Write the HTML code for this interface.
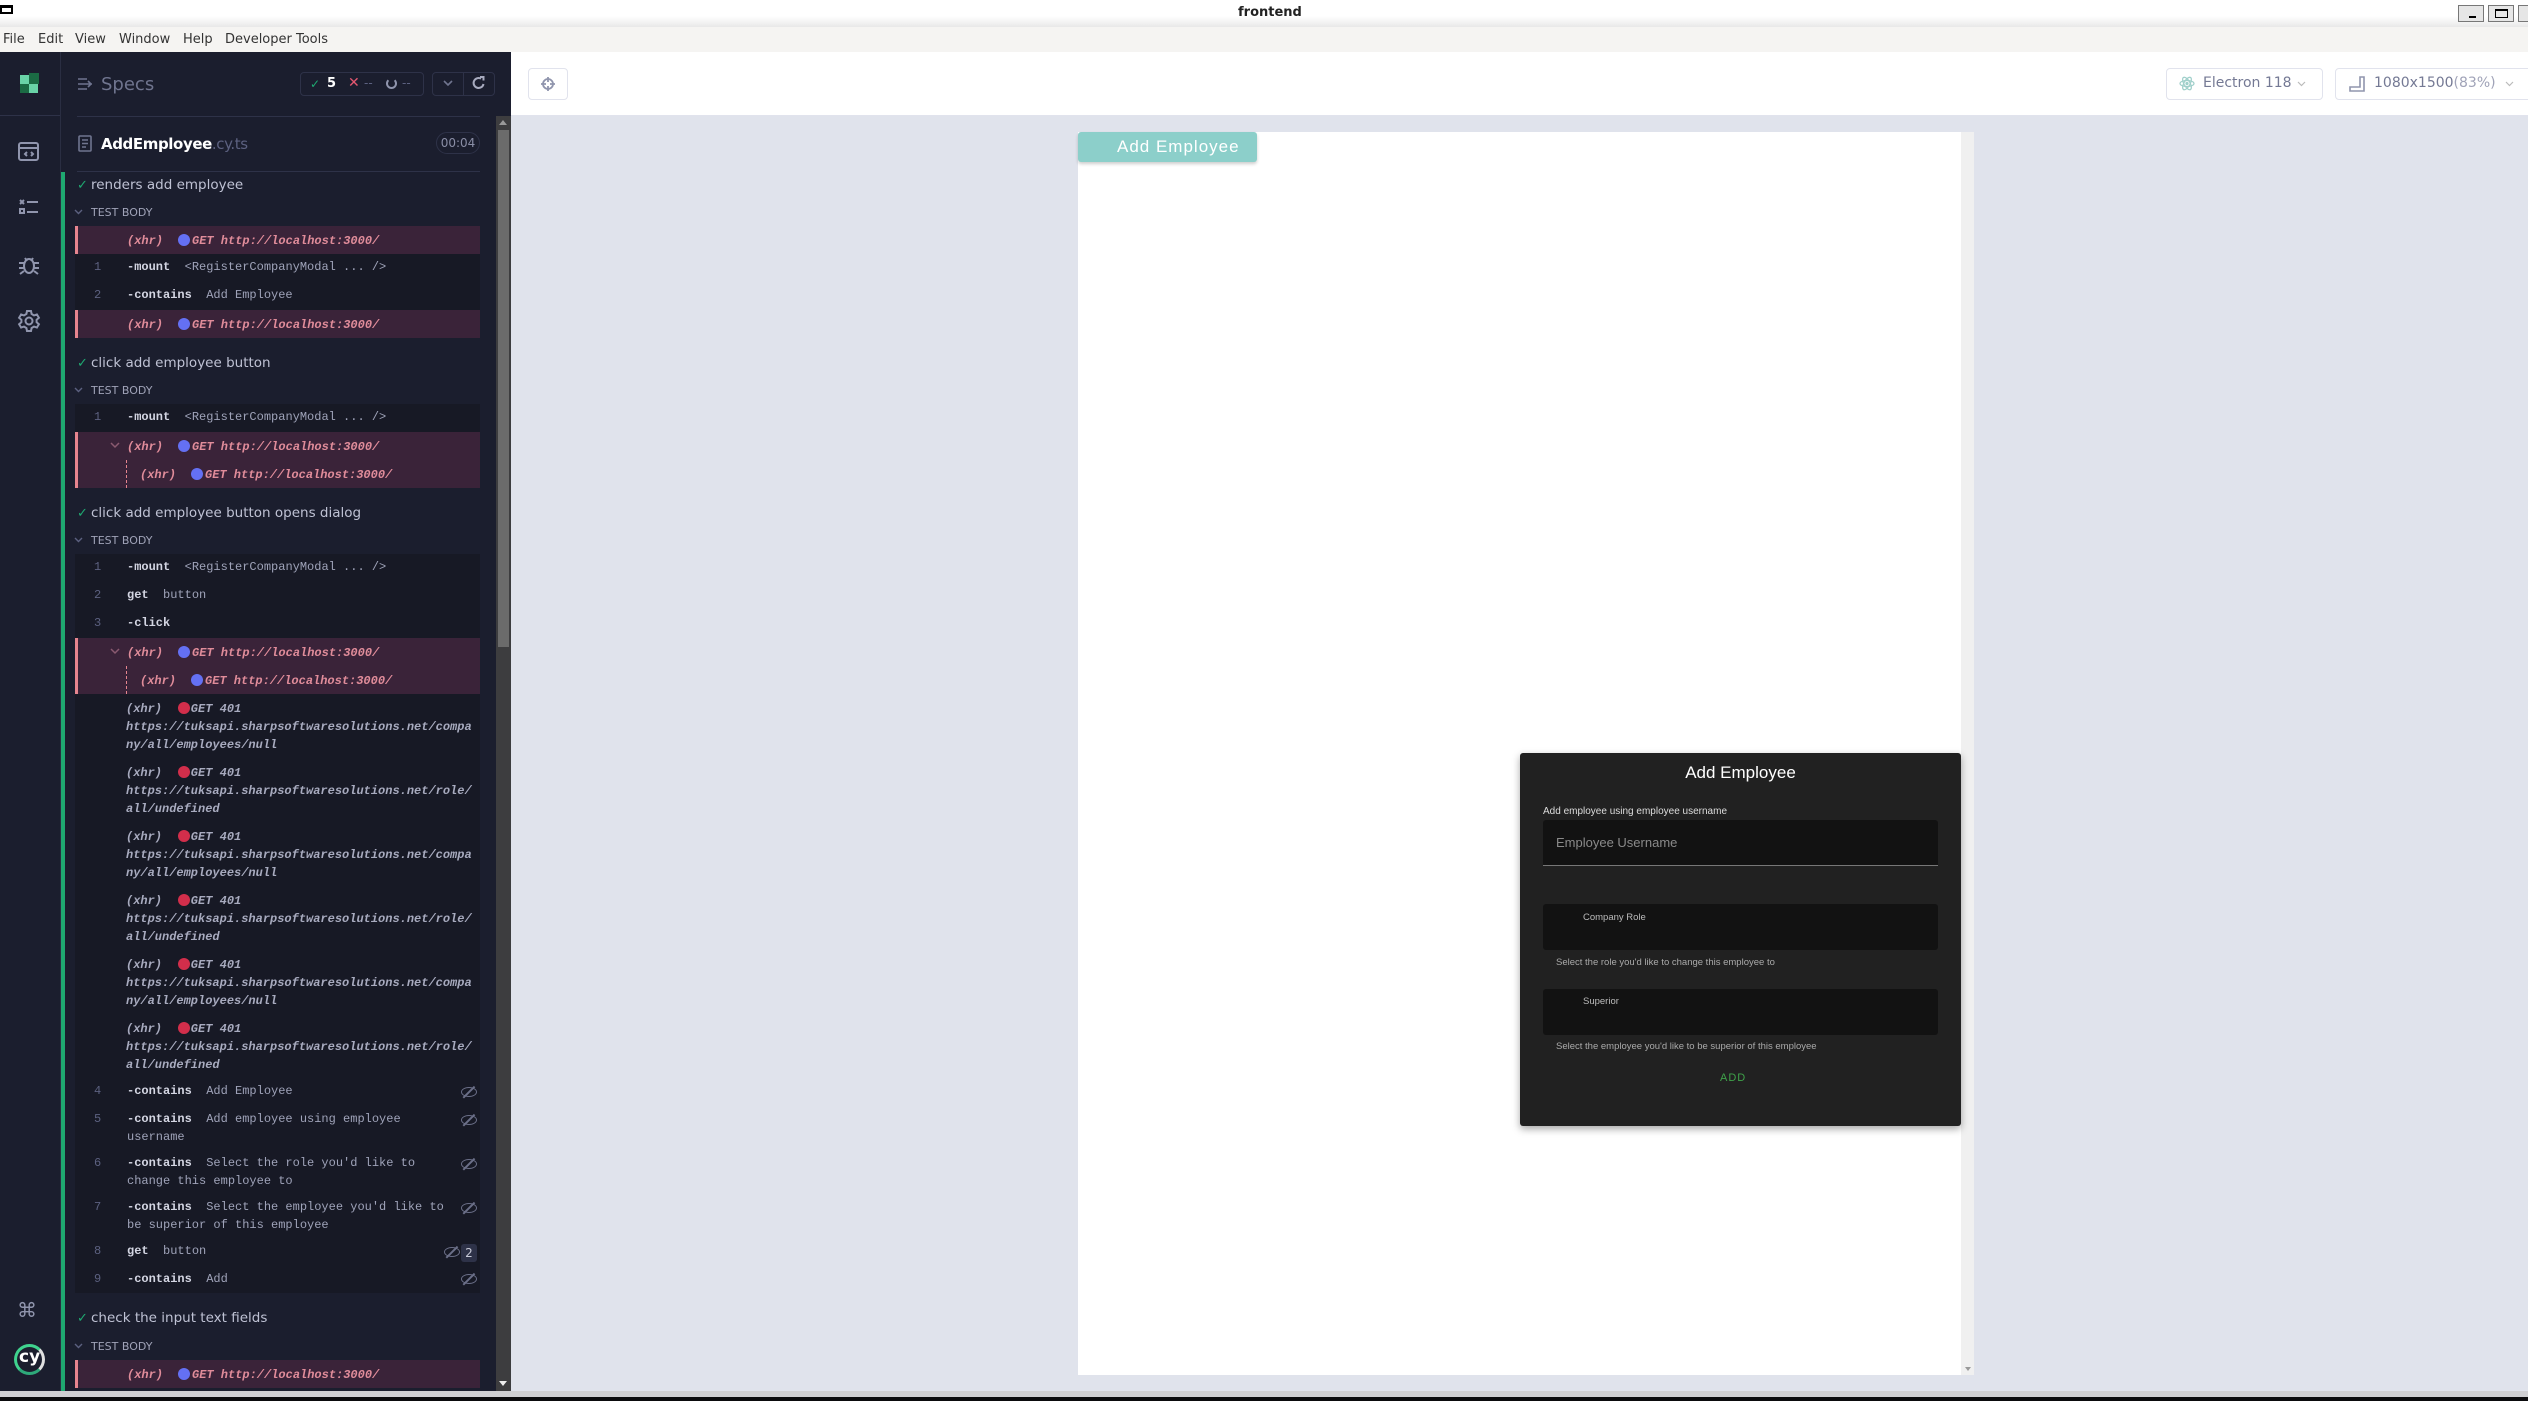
<!DOCTYPE html>
<html><head><meta charset="utf-8">
<style>
*{margin:0;padding:0;box-sizing:border-box}
body{width:2528px;height:1401px;overflow:hidden;background:#e0e3ec;font-family:"Liberation Sans",sans-serif;position:relative}
.a{position:absolute;white-space:nowrap}
.m{font-family:"Liberation Mono",monospace;font-size:12px;line-height:18px}
.s{font-family:"DejaVu Sans","Liberation Sans",sans-serif}
.x{color:#e08c9a;font-style:italic;font-weight:bold}
.g{color:#a8abbf;font-style:italic;font-weight:bold}
.dot{position:absolute;width:12px;height:12px;border-radius:6px}
.n{color:#5c6180}
.c{color:#d4d6e3;font-weight:bold}
.ar{color:#9fa3b9}
.xb{position:absolute;left:75px;width:405px;background:#3a2339;border-left:3px solid #e6858f}
.cb{position:absolute;left:75px;width:405px;background:#171925}
.t{color:#bfc2d4;font-size:13.5px}
.tb{color:#a0a3b8;font-size:11px}
.chev{position:absolute;left:74px}
.eye{position:absolute;left:461px;width:16px;height:10px;border:1.5px solid #6b6f88;border-radius:50%}
.eye:after{content:"";position:absolute;left:6px;top:-4px;width:1.5px;height:16px;background:#6b6f88;transform:rotate(45deg)}
</style></head><body>
<div class="a" style="left:0;top:0;width:2528px;height:27px;background:linear-gradient(#fff,#fff 60%,#e8e8e8)"></div>
<div class="a" style="left:0;top:5px;width:13px;height:9px;border:2px solid #000;border-top-width:3px"></div>
<div class="a s" style="left:1238px;top:5px;font-size:13px;font-weight:bold;color:#222">frontend</div>
<div class="a" style="left:2458px;top:5px;width:26px;height:17px;border:1px solid #777;background:#e6e6e6"><div style="position:absolute;left:10px;top:10px;width:7px;height:2px;background:#000"></div></div>
<div class="a" style="left:2488px;top:5px;width:26px;height:17px;border:1px solid #777;background:#e6e6e6"><div style="position:absolute;left:6px;top:3px;width:13px;height:9px;border:1px solid #000;border-top-width:2px"></div></div>
<div class="a" style="left:2518px;top:5px;width:12px;height:17px;border:1px solid #777;background:#e6e6e6"></div>
<div class="a s" style="left:0;top:27px;width:2528px;height:25px;background:#f5f4f2;font-size:13px;color:#333;line-height:26px">
<span class="a" style="left:3px">File</span><span class="a" style="left:38px">Edit</span><span class="a" style="left:75px">View</span><span class="a" style="left:119px">Window</span><span class="a" style="left:183px">Help</span><span class="a" style="left:225px">Developer Tools</span></div>
<div class="a" style="left:0;top:52px;width:61px;height:1339px;background:#1b1e2e;border-right:1px solid #2a2e42"></div>
<div class="a" style="left:0;top:115px;width:60px;height:1px;background:#2e3248"></div>
<div class="a" style="left:20px;top:75px;width:9px;height:9px;background:#69d3a7"></div>
<div class="a" style="left:29px;top:73px;width:10px;height:11px;background:#1b6b44"></div>
<div class="a" style="left:20px;top:84px;width:9px;height:9px;background:#1b6b44"></div>
<div class="a" style="left:29px;top:84px;width:9px;height:9px;background:#69d3a7"></div>
<svg class="a" style="left:18px;top:142px" width="22" height="20" viewBox="0 0 22 20" fill="none" stroke="#9095ad" stroke-width="2"><rect x="1" y="1" width="19" height="17" rx="2"/><path d="M1 6h19M9 10l-2 2 2 2M13 10l2 2-2 2"/></svg>
<svg class="a" style="left:18px;top:198px" width="22" height="20" viewBox="0 0 22 20" fill="none" stroke="#9095ad" stroke-width="2"><path d="M2 2l4 4M6 2l-4 4M9 4h11M9 14h11"/><rect x="2" y="11" width="4" height="4"/></svg>
<svg class="a" style="left:18px;top:254px" width="22" height="22" viewBox="0 0 22 22" fill="none" stroke="#9095ad" stroke-width="2"><ellipse cx="11" cy="12" rx="5" ry="7"/><path d="M7 4l2 3M15 4l-2 3M1 9h5M16 9h5M1 14h5M16 14h5M2 20l4-3M20 20l-4-3"/></svg>
<svg class="a" style="left:17px;top:309px" width="24" height="24" viewBox="0 0 24 24" fill="none" stroke="#9095ad" stroke-width="2"><circle cx="12" cy="12" r="3.5"/><path d="M10 2h4l.6 3 2.4 1.4 2.9-1 2 3.4-2.3 2v2.4l2.3 2-2 3.4-2.9-1L14.6 19l-.6 3h-4l-.6-3L7 17.6l-2.9 1-2-3.4 2.3-2v-2.4l-2.3-2 2-3.4 2.9 1L9.4 5z"/></svg>
<div class="a s" style="left:17px;top:1298px;font-size:20px;color:#9095ad">⌘</div>
<div class="a" style="left:14px;top:1344px;width:31px;height:31px;border-radius:50%;border:3px solid #3fd38e;border-right-color:#e0e0e0;border-bottom-color:#2ea97a"></div>
<div class="a s" style="left:19px;top:1347px;font-size:17px;font-weight:bold;color:#fff">cy</div>
<div class="a" style="left:61px;top:52px;width:450px;height:1339px;background:#1b1e2e"></div>
<svg class="a" style="left:77px;top:77px" width="16" height="14" viewBox="0 0 16 14" stroke="#6f748f" stroke-width="1.6" fill="none"><path d="M1 2h9M1 7h14M1 12h9M11 4l3 3-3 3"/></svg>
<div class="a s" style="left:101px;top:74px;font-size:18px;color:#70758f">Specs</div>
<div class="a" style="left:300px;top:72px;width:124px;height:24px;border:1px solid #2e3248;border-radius:4px"></div>
<div class="a s" style="left:310px;top:77px;font-size:12px;color:#1fa971;font-weight:bold">✓</div>
<div class="a s" style="left:327px;top:76px;font-size:13px;color:#fff;font-weight:bold">5</div>
<div class="a s" style="left:348px;top:75px;font-size:14px;color:#e45770;font-weight:bold">✕</div>
<div class="a s" style="left:364px;top:76px;font-size:12px;color:#5c6180">--</div>
<div class="a" style="left:386px;top:78px;width:11px;height:11px;border:2px solid #9095ad;border-top-color:transparent;border-radius:50%"></div>
<div class="a s" style="left:402px;top:76px;font-size:12px;color:#5c6180">--</div>
<div class="a" style="left:432px;top:72px;width:63px;height:24px;border:1px solid #2e3248;border-radius:4px"></div>
<div class="a" style="left:463px;top:72px;width:1px;height:24px;background:#2e3248"></div>
<svg class="a" style="left:442px;top:79px" width="12" height="8" viewBox="0 0 12 8" stroke="#70758f" stroke-width="1.6" fill="none"><path d="M2 2l4 4 4-4"/></svg>
<svg class="a" style="left:472px;top:76px" width="14" height="14" viewBox="0 0 14 14" stroke="#a8abbf" stroke-width="2" fill="none"><path d="M11.5 8A5 5 0 1 1 9 2.6M8 1h3.5v3.5"/></svg>
<div class="a" style="left:77px;top:116px;width:403px;height:1px;background:#2e3248"></div>
<svg class="a" style="left:78px;top:135px" width="14" height="17" viewBox="0 0 14 17" stroke="#70758f" stroke-width="1.6" fill="none"><rect x="1" y="1" width="12" height="15" rx="1"/><path d="M4 5h6M4 8.5h6M4 12h4"/></svg>
<div class="a s" style="left:101px;top:135px;font-size:15px;color:#fff;font-weight:bold;letter-spacing:-0.4px">AddEmployee<span style="color:#5c6180;font-weight:normal">.cy.ts</span></div>
<div class="a s" style="left:436px;top:132px;width:44px;height:22px;border:1px solid #2e3248;border-radius:11px;font-size:12px;color:#8a8ea6;text-align:center;line-height:20px">00:04</div>
<div class="a" style="left:77px;top:171px;width:403px;height:1px;background:#2e3248"></div>
<div class="a" style="left:61px;top:172px;width:4px;height:1219px;background:#1fa971"></div>

<!-- test 1 -->
<div class="a s" style="left:77px;top:178px;font-size:13px;color:#1fa971;font-weight:bold">✓</div>
<div class="a s t" style="left:91px;top:177px">renders add employee</div>
<svg class="chev" style="top:209px" width="9" height="6" viewBox="0 0 9 6" stroke="#5c6180" stroke-width="1.4" fill="none"><path d="M1 1l3.5 3.5L8 1"/></svg>
<div class="a s tb" style="left:91px;top:206px">TEST BODY</div>
<div class="xb" style="top:226px;height:28px"></div>
<div class="cb" style="top:254px;height:56px"></div>
<div class="xb" style="top:310px;height:28px"></div>
<div class="a m x" style="left:127px;top:232px">(xhr)</div><div class="dot" style="left:178px;top:234px;background:#6470f3"></div><div class="a m x" style="left:192px;top:232px">GET http://localhost:3000/</div>
<div class="a m n" style="left:94px;top:258px">1</div><div class="a m" style="left:127px;top:258px"><span class="c">-mount</span>&nbsp; <span class="ar">&lt;RegisterCompanyModal ... /&gt;</span></div>
<div class="a m n" style="left:94px;top:286px">2</div><div class="a m" style="left:127px;top:286px"><span class="c">-contains</span>&nbsp; <span class="ar">Add Employee</span></div>
<div class="a m x" style="left:127px;top:316px">(xhr)</div><div class="dot" style="left:178px;top:318px;background:#6470f3"></div><div class="a m x" style="left:192px;top:316px">GET http://localhost:3000/</div>

<!-- test 2 -->
<div class="a s" style="left:77px;top:356px;font-size:13px;color:#1fa971;font-weight:bold">✓</div>
<div class="a s t" style="left:91px;top:355px">click add employee button</div>
<svg class="chev" style="top:387px" width="9" height="6" viewBox="0 0 9 6" stroke="#5c6180" stroke-width="1.4" fill="none"><path d="M1 1l3.5 3.5L8 1"/></svg>
<div class="a s tb" style="left:91px;top:384px">TEST BODY</div>
<div class="cb" style="top:404px;height:28px"></div>
<div class="xb" style="top:432px;height:56px"></div>
<div class="a m n" style="left:94px;top:408px">1</div><div class="a m" style="left:127px;top:408px"><span class="c">-mount</span>&nbsp; <span class="ar">&lt;RegisterCompanyModal ... /&gt;</span></div>
<svg class="a" style="left:110px;top:442px" width="10" height="7" viewBox="0 0 10 7" stroke="#8a5a70" stroke-width="1.5" fill="none"><path d="M1 1l4 4 4-4"/></svg>
<div class="a m x" style="left:127px;top:438px">(xhr)</div><div class="dot" style="left:178px;top:440px;background:#6470f3"></div><div class="a m x" style="left:192px;top:438px">GET http://localhost:3000/</div>
<div class="a" style="left:126px;top:460px;height:28px;border-left:1px dashed #e6858f"></div>
<div class="a m x" style="left:140px;top:466px">(xhr)</div><div class="dot" style="left:191px;top:468px;background:#6470f3"></div><div class="a m x" style="left:205px;top:466px">GET http://localhost:3000/</div>

<!-- test 3 -->
<div class="a s" style="left:77px;top:506px;font-size:13px;color:#1fa971;font-weight:bold">✓</div>
<div class="a s t" style="left:91px;top:505px">click add employee button opens dialog</div>
<svg class="chev" style="top:537px" width="9" height="6" viewBox="0 0 9 6" stroke="#5c6180" stroke-width="1.4" fill="none"><path d="M1 1l3.5 3.5L8 1"/></svg>
<div class="a s tb" style="left:91px;top:534px">TEST BODY</div>
<div class="cb" style="top:554px;height:84px"></div>
<div class="xb" style="top:638px;height:56px"></div>
<div class="cb" style="top:694px;height:599px"></div>
<div class="a m n" style="left:94px;top:558px">1</div><div class="a m" style="left:127px;top:558px"><span class="c">-mount</span>&nbsp; <span class="ar">&lt;RegisterCompanyModal ... /&gt;</span></div>
<div class="a m n" style="left:94px;top:586px">2</div><div class="a m" style="left:127px;top:586px"><span class="c">get</span>&nbsp; <span class="ar">button</span></div>
<div class="a m n" style="left:94px;top:614px">3</div><div class="a m" style="left:127px;top:614px"><span class="c">-click</span></div>
<svg class="a" style="left:110px;top:648px" width="10" height="7" viewBox="0 0 10 7" stroke="#8a5a70" stroke-width="1.5" fill="none"><path d="M1 1l4 4 4-4"/></svg>
<div class="a m x" style="left:127px;top:644px">(xhr)</div><div class="dot" style="left:178px;top:646px;background:#6470f3"></div><div class="a m x" style="left:192px;top:644px">GET http://localhost:3000/</div>
<div class="a" style="left:126px;top:666px;height:28px;border-left:1px dashed #e6858f"></div>
<div class="a m x" style="left:140px;top:672px">(xhr)</div><div class="dot" style="left:191px;top:674px;background:#6470f3"></div><div class="a m x" style="left:205px;top:672px">GET http://localhost:3000/</div>

<div class="a m g" style="left:126px;top:700px">(xhr)&nbsp; &nbsp; GET 401<br>https://tuksapi.sharpsoftwaresolutions.net/compa<br>ny/all/employees/null</div><div class="dot" style="left:178px;top:702px;background:#d22e4b"></div>
<div class="a m g" style="left:126px;top:764px">(xhr)&nbsp; &nbsp; GET 401<br>https://tuksapi.sharpsoftwaresolutions.net/role/<br>all/undefined</div><div class="dot" style="left:178px;top:766px;background:#d22e4b"></div>
<div class="a m g" style="left:126px;top:828px">(xhr)&nbsp; &nbsp; GET 401<br>https://tuksapi.sharpsoftwaresolutions.net/compa<br>ny/all/employees/null</div><div class="dot" style="left:178px;top:830px;background:#d22e4b"></div>
<div class="a m g" style="left:126px;top:892px">(xhr)&nbsp; &nbsp; GET 401<br>https://tuksapi.sharpsoftwaresolutions.net/role/<br>all/undefined</div><div class="dot" style="left:178px;top:894px;background:#d22e4b"></div>
<div class="a m g" style="left:126px;top:956px">(xhr)&nbsp; &nbsp; GET 401<br>https://tuksapi.sharpsoftwaresolutions.net/compa<br>ny/all/employees/null</div><div class="dot" style="left:178px;top:958px;background:#d22e4b"></div>
<div class="a m g" style="left:126px;top:1020px">(xhr)&nbsp; &nbsp; GET 401<br>https://tuksapi.sharpsoftwaresolutions.net/role/<br>all/undefined</div><div class="dot" style="left:178px;top:1022px;background:#d22e4b"></div>

<div class="a m n" style="left:94px;top:1082px">4</div><div class="a m" style="left:127px;top:1082px"><span class="c">-contains</span>&nbsp; <span class="ar">Add Employee</span></div>
<div class="a m n" style="left:94px;top:1110px">5</div><div class="a m ar" style="left:127px;top:1110px"><span class="c">-contains</span>&nbsp; Add employee using employee<br>username</div>
<div class="a m n" style="left:94px;top:1154px">6</div><div class="a m ar" style="left:127px;top:1154px"><span class="c">-contains</span>&nbsp; Select the role you'd like to<br>change this employee to</div>
<div class="a m n" style="left:94px;top:1198px">7</div><div class="a m ar" style="left:127px;top:1198px"><span class="c">-contains</span>&nbsp; Select the employee you'd like to<br>be superior of this employee</div>
<div class="a m n" style="left:94px;top:1242px">8</div><div class="a m" style="left:127px;top:1242px"><span class="c">get</span>&nbsp; <span class="ar">button</span></div>
<div class="a m n" style="left:94px;top:1270px">9</div><div class="a m" style="left:127px;top:1270px"><span class="c">-contains</span>&nbsp; <span class="ar">Add</span></div>
<div class="eye" style="top:1087px"></div><div class="eye" style="top:1115px"></div><div class="eye" style="top:1159px"></div><div class="eye" style="top:1203px"></div><div class="eye" style="top:1274px"></div>
<div class="eye" style="left:444px;top:1247px"></div>
<div class="a s" style="left:461px;top:1244px;width:16px;height:18px;background:#2e3248;border-radius:3px;color:#c8cad8;font-size:12px;text-align:center;line-height:18px">2</div>

<!-- test 4 -->
<div class="a s" style="left:77px;top:1311px;font-size:13px;color:#1fa971;font-weight:bold">✓</div>
<div class="a s t" style="left:91px;top:1310px">check the input text fields</div>
<svg class="chev" style="top:1343px" width="9" height="6" viewBox="0 0 9 6" stroke="#5c6180" stroke-width="1.4" fill="none"><path d="M1 1l3.5 3.5L8 1"/></svg>
<div class="a s tb" style="left:91px;top:1340px">TEST BODY</div>
<div class="xb" style="top:1360px;height:28px"></div>
<div class="a m x" style="left:127px;top:1366px">(xhr)</div><div class="dot" style="left:178px;top:1368px;background:#6470f3"></div><div class="a m x" style="left:192px;top:1366px">GET http://localhost:3000/</div>

<div class="a" style="left:496px;top:116px;width:15px;height:1275px;background:#3d3d3f"></div>
<div class="a" style="left:498px;top:130px;width:11px;height:517px;background:#6b6b6b"></div>
<div class="a" style="left:499px;top:120px;width:0;height:0;border:4px solid transparent;border-bottom:5px solid #999;border-top:0"></div>
<div class="a" style="left:499px;top:1381px;width:0;height:0;border:4px solid transparent;border-top:5px solid #eee;border-bottom:0"></div>

<div class="a" style="left:511px;top:52px;width:2017px;height:64px;background:#fff;border-bottom:1px solid #e1e3ed"></div>
<div class="a" style="left:528px;top:68px;width:40px;height:32px;border:1px solid #e1e3ed;border-radius:4px"></div>
<svg class="a" style="left:540px;top:75px" width="16" height="18" viewBox="0 0 16 18" stroke="#9095ad" stroke-width="1.8" fill="none"><circle cx="8" cy="9" r="5"/><path d="M8 2v5M8 11v5M1 9h5M10 9h5"/></svg>
<div class="a" style="left:2166px;top:68px;width:157px;height:32px;border:1px solid #e1e3ed;border-radius:4px"></div>
<svg class="a" style="left:2179px;top:75px" width="16" height="17" viewBox="0 0 16 17" stroke="#9fcfca" stroke-width="1.2" fill="none"><ellipse cx="8" cy="8.5" rx="7" ry="3" transform="rotate(60 8 8.5)"/><ellipse cx="8" cy="8.5" rx="7" ry="3" transform="rotate(-60 8 8.5)"/><ellipse cx="8" cy="8.5" rx="7" ry="3"/><circle cx="8" cy="8.5" r="1" fill="#9fcfca"/></svg>
<div class="a s" style="left:2203px;top:75px;font-size:14px;color:#747994">Electron 118</div>
<svg class="a" style="left:2297px;top:81px" width="9" height="6" viewBox="0 0 9 6" stroke="#bbb" stroke-width="1.2" fill="none"><path d="M1 1l3.5 3.5L8 1"/></svg>
<div class="a" style="left:2335px;top:68px;width:200px;height:32px;border:1px solid #e1e3ed;border-radius:4px"></div>
<svg class="a" style="left:2349px;top:76px" width="16" height="16" viewBox="0 0 16 16" stroke="#9095ad" stroke-width="1.6" fill="none"><path d="M1 15h14V1h-4v10H1z"/></svg>
<div class="a s" style="left:2374px;top:75px;font-size:14px;color:#747994">1080x1500<span style="color:#a0a3b8">(83%)</span></div>
<svg class="a" style="left:2505px;top:81px" width="9" height="6" viewBox="0 0 9 6" stroke="#bbb" stroke-width="1.2" fill="none"><path d="M1 1l3.5 3.5L8 1"/></svg>

<div class="a" style="left:1078px;top:132px;width:896px;height:1243px;background:#fff"></div>
<div class="a" style="left:1961px;top:132px;width:13px;height:1243px;background:#f0f0f0"></div>
<div class="a" style="left:1965px;top:1367px;width:0;height:0;border:3px solid transparent;border-top:4px solid #999;border-bottom:0"></div>
<div class="a" style="left:1078px;top:132px;width:179px;height:30px;background:#8ccfca;border-radius:3px;box-shadow:0 2px 3px rgba(0,0,0,.2)"></div>
<div class="a" style="left:1117px;top:137px;font-size:17px;color:#fff;letter-spacing:1px;font-family:'Liberation Sans Narrow','Liberation Sans',sans-serif">Add Employee</div>

<div class="a" style="left:1520px;top:753px;width:441px;height:373px;background:#212121;border-radius:3px;box-shadow:0 3px 8px rgba(0,0,0,.35)"></div>
<div class="a" style="left:1520px;top:763px;width:441px;text-align:center;font-size:17px;color:#fff">Add Employee</div>
<div class="a" style="left:1543px;top:806px;font-size:10px;color:#ddd">Add employee using employee username</div>
<div class="a" style="left:1543px;top:820px;width:395px;height:46px;background:#121212;border-bottom:1px solid #777;border-radius:3px 3px 0 0"></div>
<div class="a" style="left:1556px;top:835px;font-size:13px;color:#8a8a8a">Employee Username</div>
<div class="a" style="left:1543px;top:904px;width:395px;height:46px;background:#121212;border-radius:3px"></div>
<div class="a" style="left:1583px;top:912px;font-size:9.5px;color:#bbb">Company Role</div>
<div class="a" style="left:1556px;top:957px;font-size:9.5px;color:#aaa">Select the role you'd like to change this employee to</div>
<div class="a" style="left:1543px;top:989px;width:395px;height:46px;background:#121212;border-radius:3px"></div>
<div class="a" style="left:1583px;top:996px;font-size:9.5px;color:#bbb">Superior</div>
<div class="a" style="left:1556px;top:1041px;font-size:9.5px;color:#aaa">Select the employee you'd like to be superior of this employee</div>
<div class="a" style="left:1720px;top:1072px;font-size:11px;color:#3fa34a;letter-spacing:1px">ADD</div>

<div class="a" style="left:0;top:1391px;width:2528px;height:6px;background:#cfcfd2"></div>
<div class="a" style="left:0;top:1397px;width:2528px;height:4px;background:#0b0b0d"></div>
</body></html>
